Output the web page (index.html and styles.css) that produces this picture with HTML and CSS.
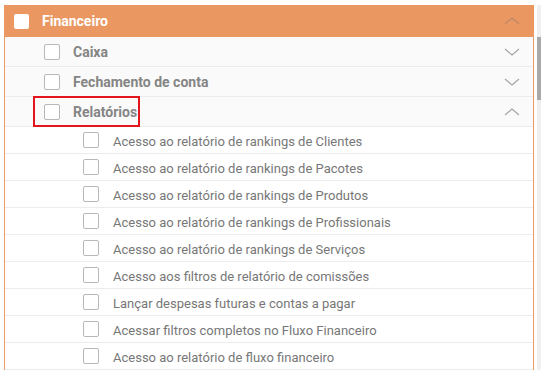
FILE: index.html
```html
<!DOCTYPE html>
<html lang="pt-BR">
<head>
<meta charset="utf-8">
<link rel="stylesheet" href="styles.css">
</head>
<body>
<div class="frame">
  <div class="panel">
    <div class="row head">
      <span class="cb cb-head"></span>
      <span class="label head-label">Financeiro</span>
      <svg class="chev chev-head" viewBox="0 0 16 8"><polyline points="1,7 8,1 15,7"/></svg>
    </div>

    <div class="row sub">
      <span class="cb"></span>
      <span class="label sub-label">Caixa</span>
      <svg class="chev" viewBox="0 0 16 8"><polyline points="1,1 8,7 15,1"/></svg>
    </div>
    <div class="row sub">
      <span class="cb"></span>
      <span class="label sub-label">Fechamento de conta</span>
      <svg class="chev" viewBox="0 0 16 8"><polyline points="1,1 8,7 15,1"/></svg>
    </div>
    <div class="row sub marked">
      <span class="cb"></span>
      <span class="label sub-label">Relatórios</span>
      <svg class="chev" viewBox="0 0 16 8"><polyline points="1,7 8,1 15,7"/></svg>
      <span class="highlight"></span>
    </div>

    <div class="row item"><span class="cb"></span><span class="label">Acesso ao relatório de rankings de Clientes</span></div>
    <div class="row item"><span class="cb"></span><span class="label">Acesso ao relatório de rankings de Pacotes</span></div>
    <div class="row item"><span class="cb"></span><span class="label">Acesso ao relatório de rankings de Produtos</span></div>
    <div class="row item"><span class="cb"></span><span class="label">Acesso ao relatório de rankings de Profissionais</span></div>
    <div class="row item"><span class="cb"></span><span class="label">Acesso ao relatório de rankings de Serviços</span></div>
    <div class="row item"><span class="cb"></span><span class="label">Acesso aos filtros de relatório de comissões</span></div>
    <div class="row item"><span class="cb"></span><span class="label">Lançar despesas futuras e contas a pagar</span></div>
    <div class="row item"><span class="cb"></span><span class="label">Acessar filtros completos no Fluxo Financeiro</span></div>
    <div class="row item"><span class="cb"></span><span class="label">Acesso ao relatório de fluxo financeiro</span></div>
  </div>
  <div class="scrollbar"><div class="thumb"></div></div>
</div>
</body>
</html>
```

FILE: styles.css
```css
html, body {
  margin: 0;
  padding: 0;
  background: #ffffff;
}

body {
  font-family: Roboto, "Liberation Sans", Arial, sans-serif;
  color: #777777;
}

.frame {
  display: flex;
  align-items: stretch;
  gap: 2px;
  padding: 5px 0 0 4px;
}

.panel {
  width: 529px;
  border-left: 1px solid #ee9a63;
  border-right: 1px solid #ee9a63;
  display: flex;
  flex-direction: column;
}

.row {
  position: relative;
  display: flex;
  align-items: center;
  box-sizing: border-box;
  border-bottom: 1px solid #ececec;
}

.head {
  height: 32px;
  background: #ea9762;
  margin: 0 -1px;
  padding: 0 14px 0 10px;
  border-bottom: none;
}

.sub {
  height: 30px;
  background: #fafafa;
  padding: 0 13px 0 39px;
}

.item {
  height: 27px;
  background: #ffffff;
  padding: 0 13px 0 78px;
}

.cb {
  flex: none;
  width: 16px;
  height: 16px;
  box-sizing: border-box;
  border: 1px solid #b8b8b8;
  border-radius: 2px;
  background: #ffffff;
}

.cb-head {
  width: 15px;
  height: 15px;
  border: none;
  border-radius: 2px;
}

.label {
  font-size: 13px;
  margin-left: 14px;
  padding-top: 2px;
  white-space: nowrap;
}

.head-label {
  color: #ffffff;
  font-weight: 700;
  font-size: 14px;
  margin-left: 13px;
  padding-top: 0;
}

.sub-label {
  font-weight: 700;
  font-size: 14px;
  color: #858585;
  margin-left: 13px;
  padding-top: 1px;
}

.chev {
  margin-left: auto;
  width: 16px;
  height: 8px;
  fill: none;
  stroke: #a3a3a3;
  stroke-width: 1.1;
}

.chev-head {
  stroke: #b9886a;
}

.highlight {
  position: absolute;
  left: 28px;
  top: -1px;
  width: 107px;
  height: 31px;
  box-sizing: border-box;
  border: 2px solid #e3141b;
  pointer-events: none;
}

.scrollbar {
  width: 4px;
  margin-left: 1px;
  background: #efefef;
  display: flex;
  flex-direction: column;
}

.thumb {
  margin-top: 32px;
  height: 63px;
  background: #a9a9a9;
}
```
